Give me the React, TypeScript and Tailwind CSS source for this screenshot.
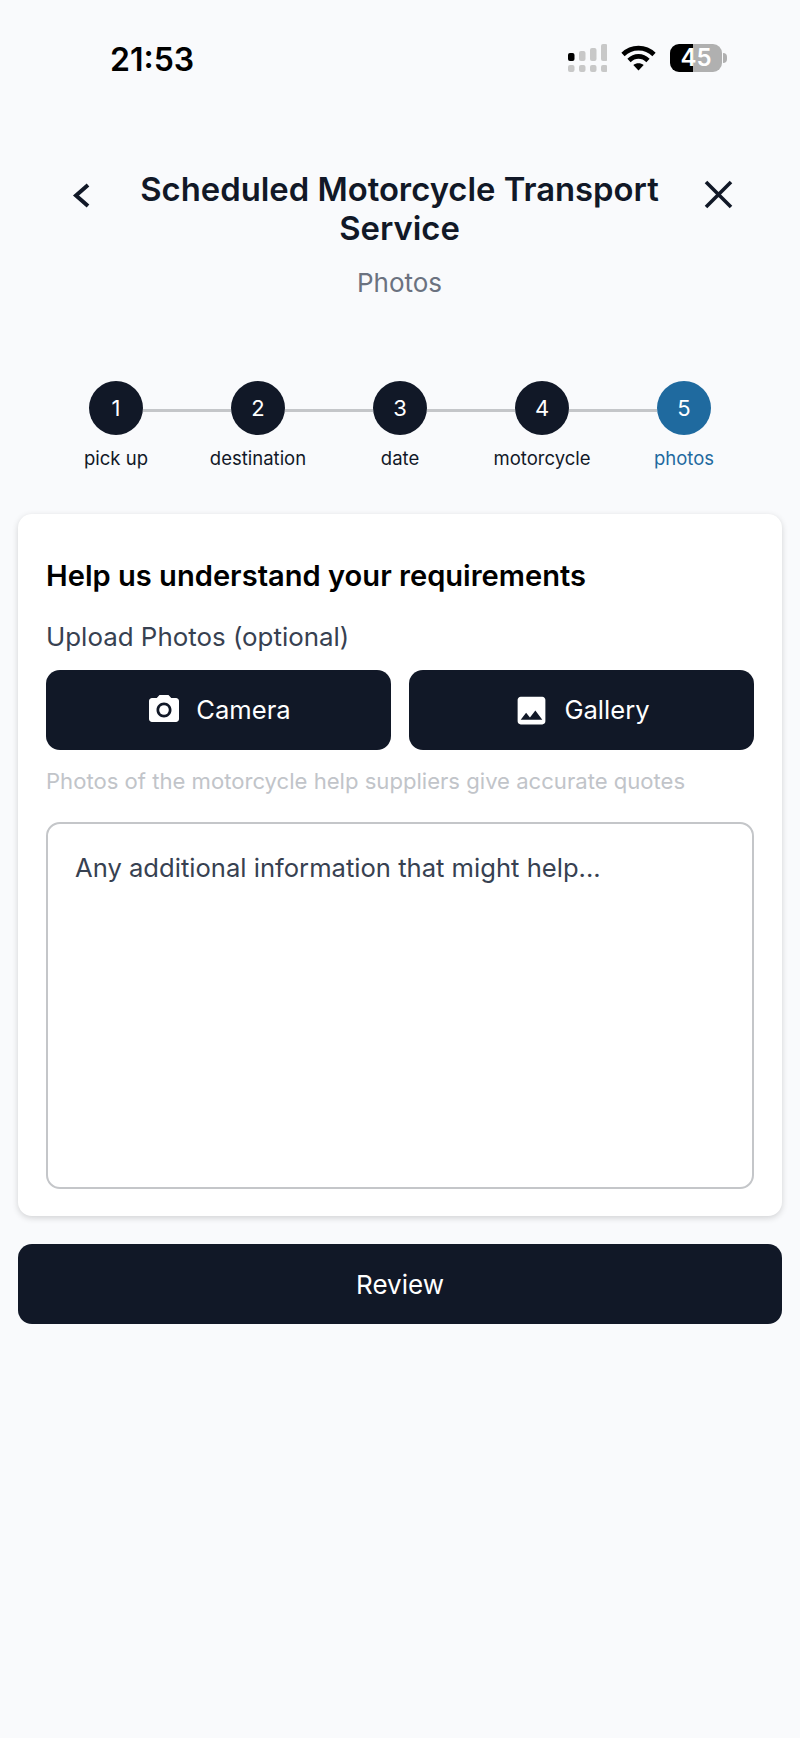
import { type FC } from 'react';

const steps = ['pick up', 'destination', 'date', 'motorcycle', 'photos'];

const StatusBar: FC = () => (
  <div className="flex h-[116px] items-start pl-[110px] pr-[73px] pt-[40px]">
    <span className="text-[32px] font-semibold leading-[40px] text-black">21:53</span>
    <div className="ml-auto mt-[4px] flex items-center">
      {/* Signal: one solid bar, the rest faded, with a dotted row beneath */}
      <svg width="39" height="28" viewBox="0 0 39 28">
        <rect x="0" y="9" width="6.5" height="8" rx="2" fill="#000" />
        <rect x="11" y="7" width="6.5" height="10" rx="2" fill="#c8c8c8" />
        <rect x="22" y="4" width="6.5" height="13" rx="2" fill="#c8c8c8" />
        <rect x="33" y="0" width="6.5" height="17" rx="2" fill="#c8c8c8" />
        <rect x="0" y="21" width="6.5" height="7" rx="2" fill="#c8c8c8" />
        <rect x="11" y="21" width="6.5" height="7" rx="2" fill="#c8c8c8" />
        <rect x="22" y="21" width="6.5" height="7" rx="2" fill="#c8c8c8" />
        <rect x="33" y="21" width="6.5" height="7" rx="2" fill="#c8c8c8" />
      </svg>
      <svg className="ml-[14px]" width="35" height="26" viewBox="0 0 35 26" fill="none" stroke="#000" strokeWidth="4.6">
        <path d="M2 9.5C10.5 1 24.5 1 33 9.5" />
        <path d="M8 15.5C13.5 10 21.5 10 27 15.5" />
        <path d="M17.5 25.5l-5.2-5.4c2.9-2.6 7.5-2.6 10.4 0z" fill="#000" stroke="none" />
      </svg>
      <div className="ml-[14px] flex h-[28px] w-[52px] items-center justify-center rounded-[9px] bg-[linear-gradient(90deg,#000_44%,#b0b0b0_44%)] text-[24px] font-semibold leading-none text-white">
        45
      </div>
      <div className="ml-[1px] h-[10px] w-[4px] rounded-r-full bg-[#b0b0b0]" />
    </div>
  </div>
);

const Header: FC = () => (
  <div className="flex items-start pl-[70px] pr-[63px] pt-[54px]">
    <svg className="mt-[12px] shrink-0" width="26" height="28" viewBox="0 0 26 28" fill="none" stroke="#111827" strokeWidth="4">
      <path d="M18 3L6 13.5 18 24" />
    </svg>
    <div className="min-w-0 flex-1 text-center">
      <h1 className="text-[32.8px] font-semibold leading-[39px] text-[#111827]">
        Scheduled Motorcycle Transport Service
      </h1>
      <p className="mt-[19px] text-[26px] leading-[32px] text-[#6b7280]">Photos</p>
    </div>
    <svg className="mt-[9px] shrink-0" width="34" height="30" viewBox="0 0 34 30" fill="none" stroke="#111827" strokeWidth="3.6">
      <path d="M3 3l25 25M28 3L3 28" />
    </svg>
  </div>
);

const Stepper: FC = () => (
  <div className="mt-[82px]">
    <div className="flex items-center px-[89px]">
      {steps.map((step, index) => (
        <div key={step} className={index === steps.length - 1 ? 'flex items-center' : 'flex flex-1 items-center'}>
          <div
            className={`flex h-[54px] w-[54px] shrink-0 items-center justify-center rounded-full text-[22px] text-white ${
              index === steps.length - 1 ? 'bg-[#1f6a9f]' : 'bg-[#111827]'
            }`}
          >
            {index + 1}
          </div>
          {index < steps.length - 1 && <div className="mt-[4px] h-[3px] flex-1 bg-[#c4c6c9]" />}
        </div>
      ))}
    </div>
    <div className="mt-[10px] grid grid-cols-5 px-[45px]">
      {steps.map((step, index) => (
        <div
          key={step}
          className={`text-center text-[18.5px] leading-[26px] ${
            index === steps.length - 1 ? 'text-[#1f6a9f]' : 'text-[#111827]'
          }`}
        >
          {step}
        </div>
      ))}
    </div>
  </div>
);

const CameraIcon: FC = () => (
  <svg width="36" height="36" viewBox="0 0 24 24" fill="#fff">
    <circle cx="12" cy="12" r="3.2" />
    <path d="M9 2L7.17 4H4c-1.1 0-2 .9-2 2v12c0 1.1.9 2 2 2h16c1.1 0 2-.9 2-2V6c0-1.1-.9-2-2-2h-3.17L15 2H9zm3 15c-2.76 0-5-2.24-5-5s2.24-5 5-5 5 2.24 5 5-2.24 5-5 5z" />
  </svg>
);

const GalleryIcon: FC = () => (
  <svg width="37" height="37" viewBox="0 0 24 24" fill="#fff">
    <path d="M21 19V5c0-1.1-.9-2-2-2H5c-1.1 0-2 .9-2 2v14c0 1.1.9 2 2 2h14c1.1 0 2-.9 2-2zM8.5 13.5l2.5 3.01L14.5 12l4.5 6H5l3.5-4.5z" />
  </svg>
);

const UploadButton: FC<{ label: string; icon: React.ReactNode }> = ({ label, icon }) => (
  <button className="flex h-[80px] items-center justify-center gap-[14px] rounded-[14px] bg-[#111827] text-[25.6px] text-white">
    {icon}
    <span>{label}</span>
  </button>
);

export default function App() {
  return (
    <div className="min-h-[1738px] bg-[#f9fafc] font-['Inter',sans-serif]">
      <StatusBar />
      <Header />
      <Stepper />
      <div className="px-[18px] pt-[43px]">
        <div className="rounded-[14px] bg-white px-[28px] pb-[27px] pt-[43px] shadow-[0_2px_6px_rgba(0,0,0,0.16)]">
          <h2 className="text-[29.1px] font-semibold leading-[38px] text-black">Help us understand your requirements</h2>
          <p className="mt-[26px] text-[25.9px] leading-[32px] text-[#374151]">Upload Photos (optional)</p>
          <div className="mt-[17px] grid grid-cols-2 gap-[18px]">
            <UploadButton label="Camera" icon={<CameraIcon />} />
            <UploadButton label="Gallery" icon={<GalleryIcon />} />
          </div>
          <p className="mt-[17px] text-[22.1px] leading-[28px] text-[#c1c4c9]">
            Photos of the motorcycle help suppliers give accurate quotes
          </p>
          <div className="mt-[27px] h-[367px] rounded-[14px] border-2 border-[#c4c6c9] px-[27px] py-[27px] text-[25.6px] leading-[34px] text-[#374151]">
            Any additional information that might help...
          </div>
        </div>
        <button className="mt-[28px] flex h-[80px] w-full items-center justify-center rounded-[14px] bg-[#111827] text-[26px] text-white">
          Review
        </button>
      </div>
    </div>
  );
}
